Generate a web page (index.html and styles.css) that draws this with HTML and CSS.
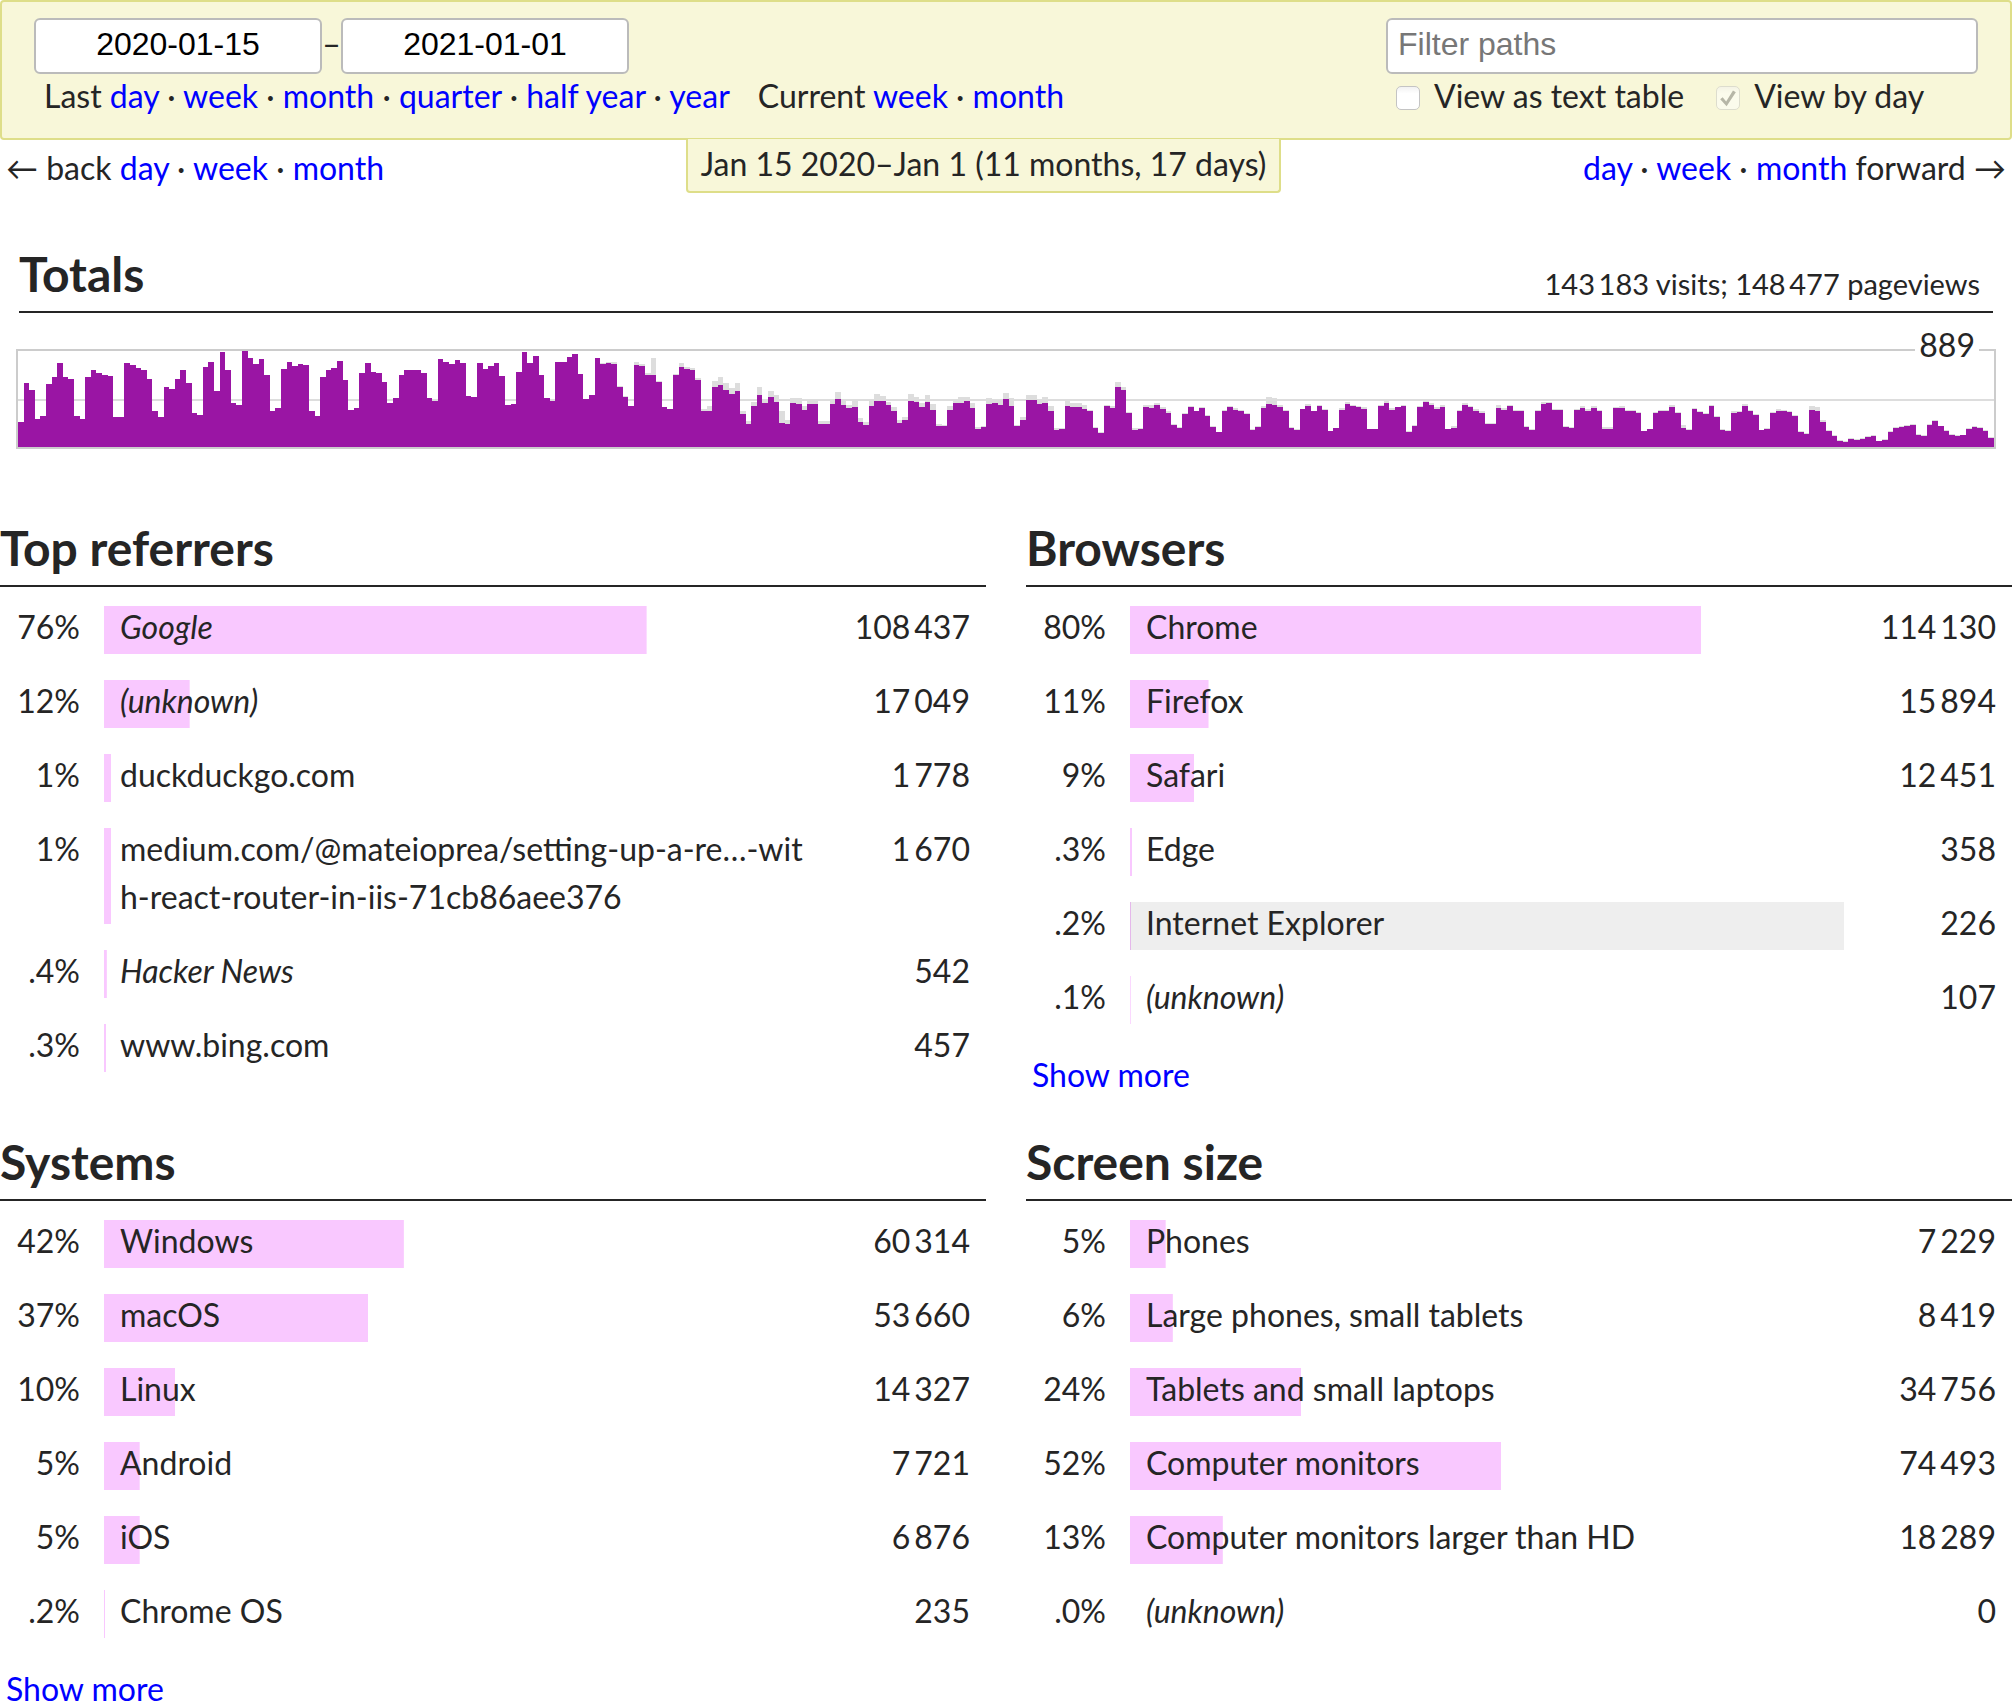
FILE: index.html
```html
<!DOCTYPE html>
<html lang="en">
<head>
<meta charset="utf-8">
<meta name="viewport" content="width=device-width, initial-scale=1">
<title>Dashboard</title>
<link rel="stylesheet" href="styles.css">
</head>
<body>
<form class="filters">
  <div class="period">
    <div class="period-dates">
      <input class="field field-date" type="text" aria-label="Start date" value="2020-01-15">
      <span class="dash">–</span>
      <input class="field field-date" type="text" aria-label="End date" value="2021-01-01">
    </div>
    <div class="quick">
      <span>Last <a href="#">day</a> · <a href="#">week</a> · <a href="#">month</a> · <a href="#">quarter</a> · <a href="#">half year</a> · <a href="#">year</a></span>
      <span>Current <a href="#">week</a> · <a href="#">month</a></span>
    </div>
  </div>
  <div class="paths">
    <input class="field field-filter" type="text" aria-label="Filter paths" placeholder="Filter paths">
    <div class="options">
      <label class="option"><input class="tick" type="checkbox"> View as text table</label>
      <label class="option"><input class="tick" type="checkbox" checked disabled> View by day</label>
    </div>
  </div>
</form>

<nav class="move">
  <div>← back <a href="#">day</a> · <a href="#">week</a> · <a href="#">month</a></div>
  <div class="range">Jan 15 2020–Jan 1 (11 months, 17 days)</div>
  <div><a href="#">day</a> · <a href="#">week</a> · <a href="#">month</a> forward →</div>
</nav>

<main>
  <section class="totals">
    <header class="totals-head">
      <h2>Totals</h2>
      <span class="totals-sum">143&thinsp;183 visits; 148&thinsp;477 pageviews</span>
    </header>
    <div class="chart">
      <svg class="chart-plot" id="plot" viewBox="0 0 353 96" preserveAspectRatio="none" role="img" aria-label="Visits and pageviews per day"></svg>
      <span class="chart-max">889</span>
    </div>
  </section>

  <div class="panels">
    <section class="panel">
      <h2>Top referrers</h2>
      <table class="stats">
        <tr><td class="share">76%</td><td><a class="bar" href="#" style="--share:76%"><em>Google</em></a></td><td class="count">108&thinsp;437</td></tr>
        <tr><td class="share">12%</td><td><a class="bar" href="#" style="--share:12%"><em>(unknown)</em></a></td><td class="count">17&thinsp;049</td></tr>
        <tr><td class="share">1%</td><td><a class="bar" href="#" style="--share:1%">duckduckgo.com</a></td><td class="count">1&thinsp;778</td></tr>
        <tr><td class="share">1%</td><td><a class="bar" href="#" style="--share:1%">medium.com/@mateioprea/setting-up-a-re…-with-react-router-in-iis-71cb86aee376</a></td><td class="count">1&thinsp;670</td></tr>
        <tr><td class="share">.4%</td><td><a class="bar" href="#" style="--share:.4%"><em>Hacker News</em></a></td><td class="count">542</td></tr>
        <tr><td class="share">.3%</td><td><a class="bar" href="#" style="--share:.3%">www.bing.com</a></td><td class="count">457</td></tr>
      </table>
    </section>

    <section class="panel">
      <h2>Browsers</h2>
      <table class="stats">
        <tr><td class="share">80%</td><td><a class="bar" href="#" style="--share:80%">Chrome</a></td><td class="count">114&thinsp;130</td></tr>
        <tr><td class="share">11%</td><td><a class="bar" href="#" style="--share:11%">Firefox</a></td><td class="count">15&thinsp;894</td></tr>
        <tr><td class="share">9%</td><td><a class="bar" href="#" style="--share:9%">Safari</a></td><td class="count">12&thinsp;451</td></tr>
        <tr><td class="share">.3%</td><td><a class="bar" href="#" style="--share:.3%">Edge</a></td><td class="count">358</td></tr>
        <tr><td class="share">.2%</td><td><a class="bar bar-active" href="#" style="--share:.2%">Internet Explorer</a></td><td class="count">226</td></tr>
        <tr><td class="share">.1%</td><td><a class="bar" href="#" style="--share:.1%"><em>(unknown)</em></a></td><td class="count">107</td></tr>
      </table>
      <a class="more" href="#">Show more</a>
    </section>

    <section class="panel">
      <h2>Systems</h2>
      <table class="stats">
        <tr><td class="share">42%</td><td><a class="bar" href="#" style="--share:42%">Windows</a></td><td class="count">60&thinsp;314</td></tr>
        <tr><td class="share">37%</td><td><a class="bar" href="#" style="--share:37%">macOS</a></td><td class="count">53&thinsp;660</td></tr>
        <tr><td class="share">10%</td><td><a class="bar" href="#" style="--share:10%">Linux</a></td><td class="count">14&thinsp;327</td></tr>
        <tr><td class="share">5%</td><td><a class="bar" href="#" style="--share:5%">Android</a></td><td class="count">7&thinsp;721</td></tr>
        <tr><td class="share">5%</td><td><a class="bar" href="#" style="--share:5%">iOS</a></td><td class="count">6&thinsp;876</td></tr>
        <tr><td class="share">.2%</td><td><a class="bar" href="#" style="--share:.2%">Chrome OS</a></td><td class="count">235</td></tr>
      </table>
      <a class="more" href="#">Show more</a>
    </section>

    <section class="panel">
      <h2>Screen size</h2>
      <table class="stats">
        <tr><td class="share">5%</td><td><a class="bar" href="#" style="--share:5%">Phones</a></td><td class="count">7&thinsp;229</td></tr>
        <tr><td class="share">6%</td><td><a class="bar" href="#" style="--share:6%">Large phones, small tablets</a></td><td class="count">8&thinsp;419</td></tr>
        <tr><td class="share">24%</td><td><a class="bar" href="#" style="--share:24%">Tablets and small laptops</a></td><td class="count">34&thinsp;756</td></tr>
        <tr><td class="share">52%</td><td><a class="bar" href="#" style="--share:52%">Computer monitors</a></td><td class="count">74&thinsp;493</td></tr>
        <tr><td class="share">13%</td><td><a class="bar" href="#" style="--share:13%">Computer monitors larger than HD</a></td><td class="count">18&thinsp;289</td></tr>
        <tr><td class="share">.0%</td><td><a class="bar" href="#" style="--share:0%"><em>(unknown)</em></a></td><td class="count">0</td></tr>
      </table>
    </section>
  </div>
</main>
<script src="chart.js"></script>
</body>
</html>
```
FILE: styles.css
```css
* {
  box-sizing: border-box;
}

body {
  margin: 0;
  color: #252525;
  background: #fff;
  font: 32px/48px Lato, sans-serif;
}

a {
  color: #00f;
  text-decoration: none;
}

h2 {
  margin: 0;
  padding-bottom: 2px;
  font-size: 48px;
  line-height: 70px;
  font-weight: 700;
}

/* Filter bar */
.filters {
  display: flex;
  justify-content: space-between;
  padding: 16px 32px 20px;
  border: 2px solid #dede89;
  border-radius: 4px;
  background: #f8f7d9;
  line-height: 44px;
}

.period-dates {
  display: flex;
  align-items: center;
}

.dash {
  width: 19px;
  padding-bottom: 4px;
  text-align: center;
}

.field {
  height: 56px;
  padding: 0 10px 4px;
  border: 2px solid #bbb;
  border-radius: 6px;
  background: #fff;
  color: #000;
  font: 32px "Liberation Sans", Arial, sans-serif;
}

.field::placeholder {
  color: #777;
}

.field-date {
  width: 288px;
  text-align: center;
}

.field-filter {
  display: block;
  width: 592px;
}

.quick {
  display: flex;
  gap: 28px;
  padding-left: 10px;
}

.options {
  display: flex;
  gap: 32px;
  padding-left: 10px;
}

.option {
  display: flex;
  align-items: center;
  gap: 14px;
}

.tick {
  appearance: none;
  width: 24px;
  height: 24px;
  margin: 4px 0 0;
  border: 1px solid #c4c4c4;
  border-radius: 5px;
  background: linear-gradient(#f2f2f2, #fff 30%);
}

.tick:disabled {
  opacity: .5;
}

.tick:checked::before {
  content: "";
  display: block;
  height: 22px;
  background: #777;
  clip-path: polygon(14% 56%, 25% 47%, 41% 66%, 72% 16%, 85% 24%, 43% 87%);
}

/* Period navigation */
.move {
  display: flex;
  justify-content: space-between;
  padding: 0 6px;
}

.move > div {
  padding-top: 4px;
}

.move > .range {
  margin-top: -1px;
  padding: 1px 13px 3px;
  border: 2px solid #dede89;
  border-top: 0;
  border-radius: 0 0 4px 4px;
  background: #f8f7d9;
}

/* Totals */
.totals {
  padding: 46px 16px 0;
}

.totals-head {
  display: flex;
  justify-content: space-between;
  align-items: flex-end;
  margin: 0 3px;
  border-bottom: 2px solid #252525;
}

.totals-sum {
  padding: 0 13px 5px 0;
  font-size: 29px;
  line-height: 44px;
}

.chart {
  position: relative;
  height: 100px;
  margin-top: 36px;
  border: 2px solid #ccc;
  background: linear-gradient(#ddd, #ddd) 0 48px / 100% 2px no-repeat;
}

.chart-plot {
  display: block;
  width: 100%;
  height: 100%;
  shape-rendering: crispEdges;
}

.plot-views {
  fill: #ddd;
}

.plot-visits {
  fill: #9a15a4;
}

.chart-max {
  position: absolute;
  top: -22px;
  right: 15px;
  padding: 0 4px;
  background: #fff;
  line-height: 32px;
}

/* Panels */
.panels {
  display: grid;
  grid-template-columns: 1fr 1fr;
  gap: 32px 40px;
  padding-top: 64px;
}

.panel > h2 {
  border-bottom: 2px solid #252525;
}

.stats {
  width: 100%;
  margin-top: 6px;
  border-collapse: collapse;
  table-layout: fixed;
}

.stats td {
  padding: 10px 0 13px;
  vertical-align: top;
}

.stats .share {
  width: 104px;
  padding-right: 24px;
  text-align: right;
}

.stats .count {
  width: 168px;
  padding-right: 16px;
  text-align: right;
  white-space: nowrap;
}

/* The coloured bar starts a little below the top of its text line. */
.bar {
  --fill: #f9c8ff;
  --track: transparent;
  display: block;
  padding: 0 12px 3px 16px;
  background:
    linear-gradient(var(--fill), var(--fill)) 0 100% / var(--share) calc(100% - 3px) no-repeat,
    linear-gradient(var(--track), var(--track)) 0 100% / 100% calc(100% - 3px) no-repeat;
  color: inherit;
  word-break: break-all;
}

.bar-active {
  --fill: #e5b8eb;
  --track: #eee;
}

.more {
  display: inline-block;
  margin-top: 18px;
  padding-left: 6px;
  line-height: 40px;
  vertical-align: top;
}
```
FILE: chart.js
```js
// Daily values in chart units: visits, or visits/pageviews when they differ.
const days = `
25 64 57 28 31 63 70 84 70 68 31 28 70 77 74 72 71 30 30 84 82 79 77 68 36 30 60 58 68 77
64 34 32 80 85 56 95 77 44 42 96 89 83 88 72 36 39 78 85 81 83 82 36 31 70 77 79 86 67 37
39 74 84 75 74 65 44 49 72 77 77 77 74 49 46 88 85 83 87 84 51 50 84 78 81 84 71 42 43 75
95 84 91 72 49 46/48 85 85 90 93 73 48 52 89 83/84 84/85 83/85 60/61 50/51 41
82/85 81/83 72/74 72/89 65/66 40 38 72/73 80/84 78/80 77/79 67/69 36/38 36/41 60/66
62/70 57/64 53/59 56/64 33/36 23/26 41/45 52/60 44/48 50/56 45/52 24/36 23/27 44/49
43/49 37/41 43/47 43/47 23/26 23/26 43/47 48/55 42/47 39/42 40/47 25/29 22/25 41/47
46/53 46/51 42/45 36/40 24/27 27/30 46/53 45/50 40/44 45/52 37/43 21/23 21/22 37/41
44/47 44/50 46/50 39/44 18/20 20/21 43/49 44/48 42/48 48/54 41/49 21/22 27/30 47/52
47/52 43/48 44/50 36/41 17/19 18/19 41/46 40/44 40/44 38/42 36/37 19/20 14/15 41/42
39/41 60/65 57/60 34/35 17/19 18/19 40/42 39/42 42/44 38/40 34/36 22/23 19/20 33/34
40/41 36 39/40 31/32 20/21 15 36/37 40/41 37/39 36/37 33/34 17/18 20/21 39/41 43/50
42/49 40/42 36/37 19/20 17/18 38 41/43 36 41/42 37/38 16 19 37/39 43/45 41/42 40/41
38/40 18 18 41/42 44/46 37/39 40 41/42 15/16 21/22 40/41 45/46 42/44 38/40 40/42 18
19/21 36/37 42/44 40/41 36/38 34/36 23/24 23/24 39/42 37/39 41/42 36/37 36/37 20/21
17/18 36/37 43/45 44/45 37/38 37/38 20/21 19/20 37/38 39/41 36/38 39/41 36/37 18/20
18/20 39/40 39/41 36/37 36/37 34/35 16 18 34/35 36/37 36/37 40/42 34/35 19/22 17/18
38/39 35/36 33/34 41/42 30/31 17/18 16/17 34/36 35/36 41/43 36/37 32/33 17 18/19 34/35
36/38 36/37 35/36 31/32 15/16 13/14 37/41 36/40 25/27 16/17 11/12 6/7 5/6 8/9 7/8 8/9
10/11 11/12 6 7/8 15/16 19/20 20/21 21/22 22/23 12/13 11/12 22/23 26/27 21 16/17 12/13
11/12 12 18/19 20/21 19/20 16/17 9/10`.trim().split(/\s+/).map(d => d.split('/').map(Number));

const plot = document.getElementById('plot');
const height = 96;

function addSeries(className, value) {
  const path = document.createElementNS('http://www.w3.org/2000/svg', 'path');
  const steps = days.map((day, i) => `V${height - value(day)}H${i + 1}`).join('');
  path.setAttribute('class', className);
  path.setAttribute('d', `M0 ${height}${steps}V${height}Z`);
  plot.append(path);
}

addSeries('plot-views', day => day[day.length - 1]);
addSeries('plot-visits', day => day[0]);
```
